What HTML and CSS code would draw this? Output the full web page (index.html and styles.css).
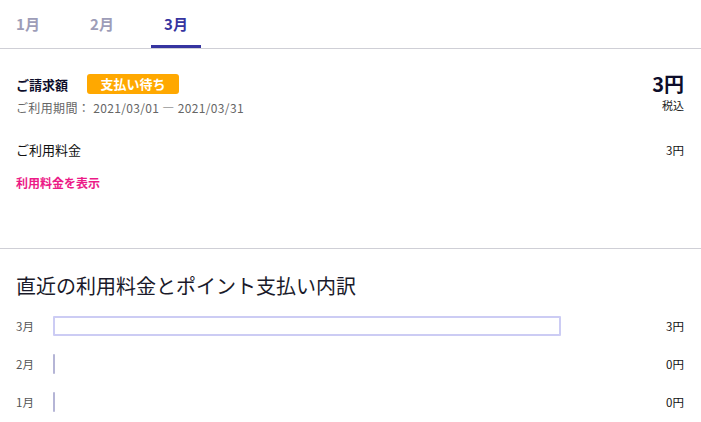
FILE: index.html
```html
<!DOCTYPE html>
<html lang="ja">
<head>
  <meta charset="UTF-8">
  <meta name="viewport" content="width=device-width, initial-scale=1.0">
  <title>ご請求額</title>
  <link rel="stylesheet" href="styles.css">
</head>
<body>
  <nav class="tabs">
    <a class="tab" href="#">1月</a>
    <a class="tab" href="#">2月</a>
    <a class="tab active" href="#">3月</a>
  </nav>

  <section class="bill">
    <div class="bill-head">
      <div>
        <div class="bill-title">
          <span>ご請求額</span>
          <span class="badge">支払い待ち</span>
        </div>
        <p class="period">ご利用期間： 2021/03/01 — 2021/03/31</p>
      </div>
      <div class="total">
        <div class="total-amount">3円</div>
        <div class="tax">税込</div>
      </div>
    </div>
    <div class="usage-row">
      <span>ご利用料金</span>
      <span>3円</span>
    </div>
    <a class="show-link" href="#">利用料金を表示</a>
  </section>

  <section class="history">
    <h2>直近の利用料金とポイント支払い内訳</h2>
    <div class="chart-row">
      <span class="month">3月</span>
      <div class="track"><div class="bar" style="width: 100%"></div></div>
      <span class="value">3円</span>
    </div>
    <div class="chart-row">
      <span class="month">2月</span>
      <div class="track"><div class="bar empty"></div></div>
      <span class="value">0円</span>
    </div>
    <div class="chart-row">
      <span class="month">1月</span>
      <div class="track"><div class="bar empty"></div></div>
      <span class="value">0円</span>
    </div>
  </section>
</body>
</html>
```

FILE: styles.css
```css
body {
  margin: 0;
  font-family: "Noto Sans CJK JP", "Noto Sans", sans-serif;
  background: #fff;
  color: #111;
}

.tabs {
  display: flex;
  gap: 24px;
  padding-left: 3px;
  height: 48px;
  border-bottom: 1px solid #cfcfd6;
}

.tab {
  width: 50px;
  display: flex;
  align-items: center;
  justify-content: center;
  font-size: 15px;
  font-weight: bold;
  color: #9d9db8;
  text-decoration: none;
  box-sizing: border-box;
  border-bottom: 3px solid transparent;
  padding-top: 1px;
}

.tab.active {
  color: #3634a0;
  border-bottom-color: #3634a0;
  border-radius: 2px 2px 0 0;
}

.bill {
  padding: 24px 17px 0 16px;
  height: 175px;
  border-bottom: 1px solid #cfcfd6;
}

.bill-head {
  display: flex;
  justify-content: space-between;
}

.bill-title {
  display: flex;
  align-items: center;
  gap: 19px;
  font-size: 13px;
  font-weight: bold;
  color: #0d0d2a;
  height: 22px;
}

.badge {
  background: #ffa800;
  color: #fff;
  border-radius: 3px;
  width: 92px;
  height: 20px;
  line-height: 20px;
  text-align: center;
  font-size: 13px;
}

.period {
  margin: 4px 0 0;
  font-size: 12px;
  letter-spacing: 0.35px;
  color: #666;
}

.total {
  text-align: right;
  padding-top: 0;
}

.total-amount {
  font-size: 20px;
  font-weight: bold;
  line-height: 22px;
  color: #0d0d2a;
}

.tax {
  margin-top: 4px;
  font-size: 11px;
  line-height: 12px;
  color: #222;
}

.usage-row {
  display: flex;
  justify-content: space-between;
  margin-top: 24px;
  font-size: 13px;
  line-height: 20px;
}

.usage-row span:last-child {
  font-size: 11.5px;
}

.show-link {
  display: inline-block;
  margin-top: 14px;
  font-size: 12px;
  font-weight: bold;
  color: #ec1a87;
  text-decoration: none;
}

.history {
  padding: 0 17px 0 16px;
}

.history h2 {
  margin: 23px 0 16px;
  font-size: 20px;
  font-weight: normal;
  line-height: 28px;
  color: #1a1a2a;
}

.chart-row {
  display: flex;
  align-items: center;
  height: 20px;
  margin-bottom: 18px;
  font-size: 11.5px;
  color: #555;
}

.month {
  width: 37px;
}

.track {
  width: 508px;
  height: 20px;
}

.bar {
  height: 20px;
  box-sizing: border-box;
  border: 2px solid #ccccf4;
  border-radius: 1px;
}

.bar.empty {
  width: 2px;
  border: none;
  background: #b5b5d6;
}

.value {
  margin-left: auto;
  color: #111;
}
```
